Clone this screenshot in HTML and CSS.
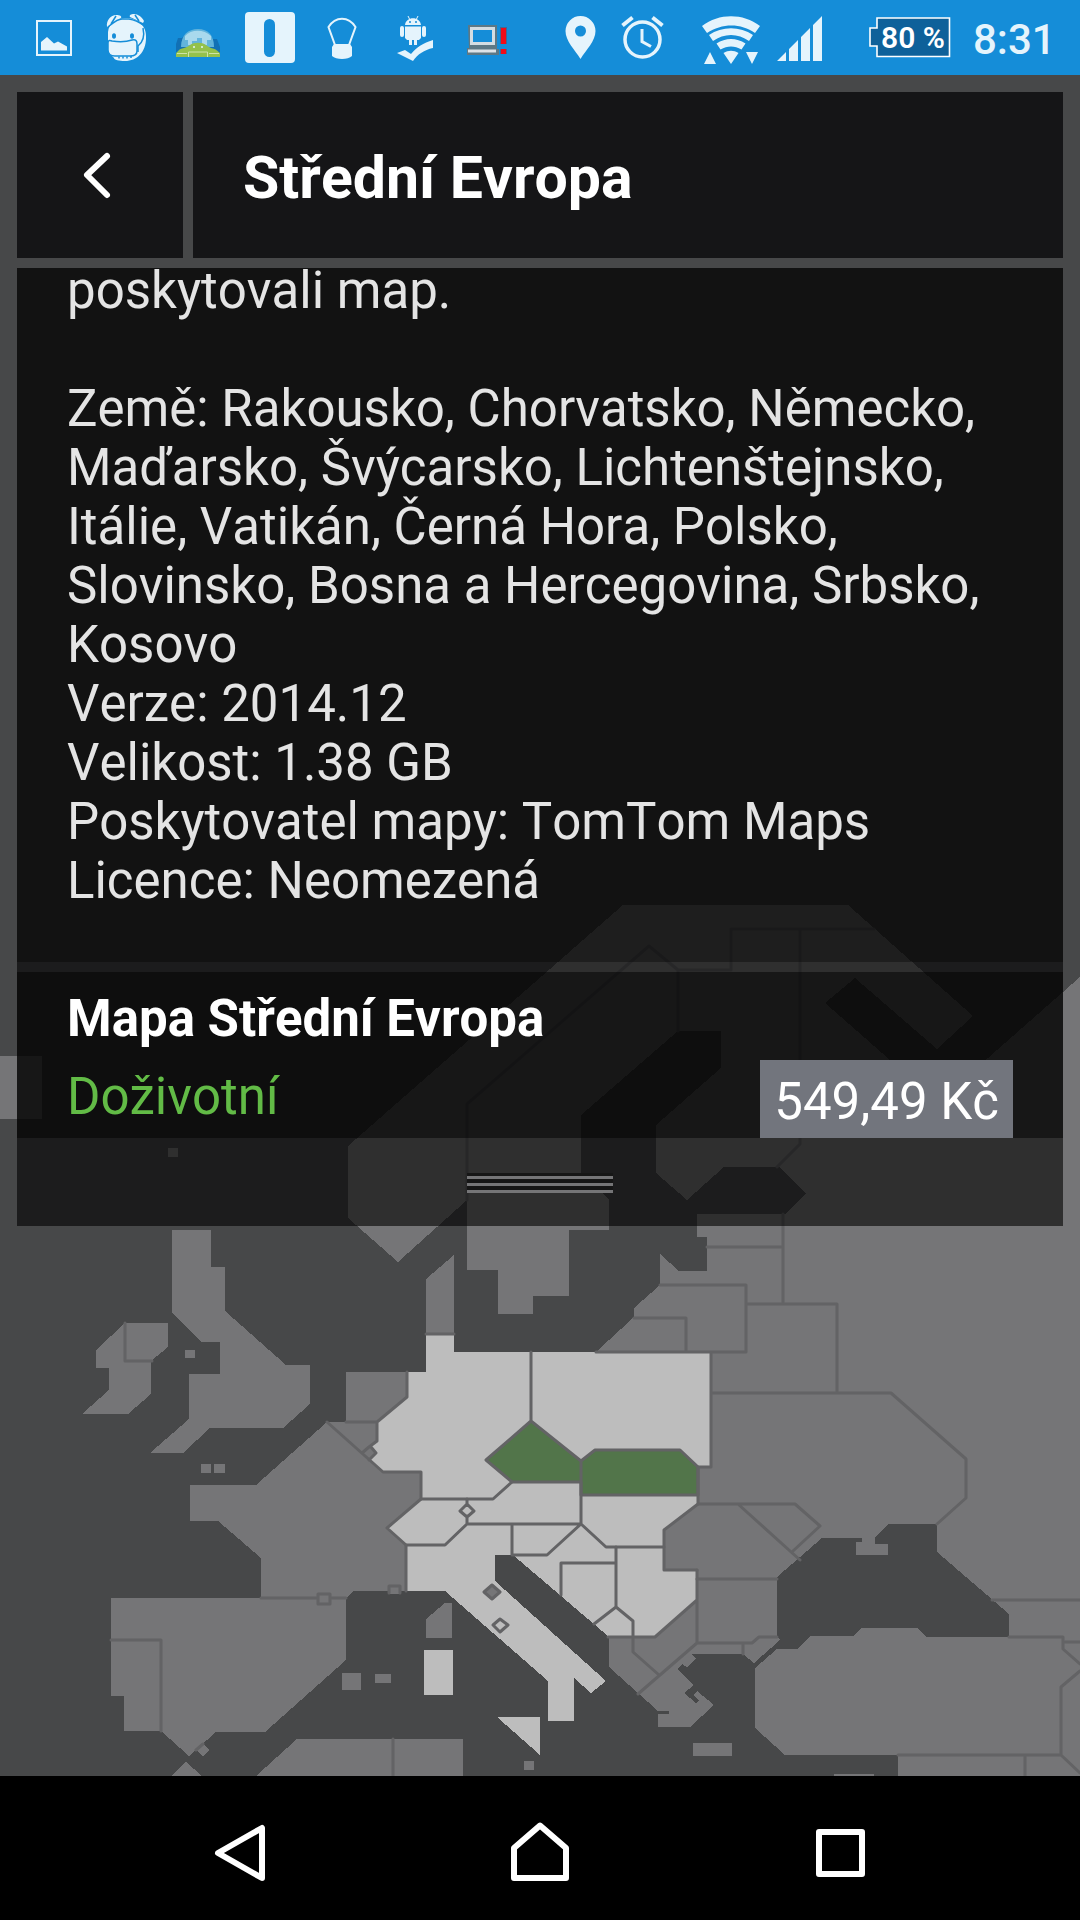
FILE: index.html
```html
<!DOCTYPE html>
<html lang="cs">
<head>
<meta charset="utf-8">
<meta name="viewport" content="width=device-width, initial-scale=1">
<title>Střední Evropa</title>
<link rel="stylesheet" href="styles.css">
</head>
<body>
<header class="status">
  <div class="status-group">
    <svg class="status-icon" width="72" height="75" viewBox="18 0 72 75" aria-hidden="true">
      <rect x="37" y="21" width="34" height="34" fill="none" stroke="#e5f4fc" stroke-width="2"/>
      <path d="M41 50.500V42l6-5 7 6.500 4-2 9 5V50.500Z" fill="#e5f4fc"/>
    </svg>
    <svg class="status-icon" width="72" height="75" viewBox="90 0 72 75" aria-hidden="true">
      <path d="M108 42V32c1-9 8-13 17-14 13 0 22 8 21 20 0 14-9 23-21 23-6 0-11-1-11-3l-4-4Z" fill="#e5f4fc"/>
      <path d="M107 27c-1-7 4-12 9-12 4 0 6 1 5 3ZM144 21c-2-4-6-7-10-7-3 0-5 1-4 3l13 6Z" fill="#e5f4fc"/>
      <path d="M108 27c5-4 9-8 14-8h7c6 1 10 3 14 6M111 24l5-8M135 15l4 6" fill="none" stroke="#158dd8" stroke-width="1.500"/>
      <path d="M108 43c0-3 2-3 4-2 7 1 14 1 20-1 4-1 5 1 5 4v7c0 4-3 5-7 5h-15c-5 0-7-3-7-6Z" fill="#e5f4fc" stroke="#158dd8" stroke-width="1.500"/>
      <path d="M143 28c2 9 0 14-5 18v6M119 56.500v2M123 56.500v2M127 56.500v2M131 56v2" fill="none" stroke="#158dd8" stroke-width="1.500"/>
      <ellipse cx="114" cy="36" rx="2" ry="2.800" fill="#158dd8"/><ellipse cx="132" cy="36" rx="2" ry="2.800" fill="#158dd8"/>
    </svg>
    <svg class="status-icon" width="72" height="75" viewBox="162 0 72 75" aria-hidden="true">
      <path d="M176 57V44l2-6h4l4-4h23l4 5h4l3 8v10Z" fill="#1170b5"/>
      <path d="M181 47c0-12 7-18 17-18s16 6 16 18Z" fill="#62b4dc"/>
      <path d="M185 36c6-7 19-7 26 0v4h-4v5h-5v-7h-5v3h-5v4h-4v-5h-3Z" fill="#a9d9ed"/>
      <path d="M176 57v-4c3-2 2-4 8-5 3-1 5-2 6-3 4-3 12-3 16 0 1 1 3 2 5 3 6 1 6 3 9 5v4Z" fill="#94c14b"/>
      <path d="M188.500 57v-5h19v5M177 53.500h10M209 53.500h10" fill="none" stroke="#cfe3a8" stroke-width="1"/>
      <circle cx="194" cy="47" r="1" fill="#e5f4fc"/><circle cx="202" cy="47" r="1" fill="#e5f4fc"/>
    </svg>
    <svg class="status-icon" width="72" height="75" viewBox="234 0 72 75" aria-hidden="true">
      <rect x="245" y="12" width="50" height="51" rx="4" fill="#e5f4fc"/>
      <rect x="264" y="19" width="11" height="38" rx="5.500" fill="#158dd8"/>
    </svg>
    <svg class="status-icon" width="72" height="75" viewBox="306 0 72 75" aria-hidden="true">
      <path d="M335 45L328.500 27c7-11 20-11 27 0L349 45" fill="none" stroke="#e5f4fc" stroke-width="2"/>
      <path d="M334 44h16l2 3v9c-4 4-16 4-20 0v-9Z" fill="#e5f4fc"/>
    </svg>
    <svg class="status-icon" width="72" height="75" viewBox="378 0 72 75" aria-hidden="true">
      <path d="M405 25c1-9 15-9 16 0ZM405 26.500h16V38l-2 2h-2v5h-3v-5h-2v5h-3v-5h-2l-2-2Z" fill="#e5f4fc"/>
      <rect x="400" y="26" width="4" height="11" rx="2" fill="#e5f4fc"/><rect x="422" y="26" width="4" height="11" rx="2" fill="#e5f4fc"/>
      <path d="M408 16l2 4M418 16l-2 4" stroke="#e5f4fc"/>
      <circle cx="410" cy="22" r="1" fill="#158dd8"/><circle cx="416" cy="22" r="1" fill="#158dd8"/>
      <path d="M397 53l8-3 6 4c6-7 12-11 22-14v8c-9 2-15 6-20 13Z" fill="#e5f4fc"/>
    </svg>
    <svg class="status-icon" width="72" height="75" viewBox="450 0 72 75" aria-hidden="true">
      <path d="M468 25h29v24h2v6h-32v-7h2Z" fill="#5d7885"/>
      <rect x="471.500" y="28.500" width="22" height="15" fill="#158dd8" stroke="#d3dde3" stroke-width="3"/>
      <path d="M468 51h28" stroke="#dde3e7" stroke-width="3"/>
      <path d="M503.500 27v17M503.500 49v5" stroke="#46658e" stroke-width="7"/>
      <path d="M503.500 28v16M503.500 49v5" stroke="#f00b18" stroke-width="5"/>
    </svg>
  </div>
  <div class="status-group">
    <svg class="status-icon" width="61" height="75" viewBox="550 0 61 75" aria-hidden="true">
      <path fill-rule="evenodd" d="M580.500 59C575 50 565.500 41 565.500 31a15 15 0 0 1 30 0C595.500 41 586 50 580.500 59ZM580.500 25.500a5.500 5.500 0 1 0 0 11 5.500 5.500 0 0 0 0-11Z" fill="#e5f4fc"/>
    </svg>
    <svg class="status-icon" width="73" height="75" viewBox="611 0 73 75" aria-hidden="true">
      <circle cx="642.500" cy="39.500" r="17.500" fill="none" stroke="#e5f4fc" stroke-width="3.500"/>
      <path d="M622.500 25.500l10-8M662.500 25.500l-10-8" stroke="#e5f4fc" stroke-width="4"/>
      <path d="M642 29v12.500l9 5" fill="none" stroke="#e5f4fc" stroke-width="3"/>
    </svg>
    <svg class="status-icon" width="84" height="75" viewBox="684 0 84 75" aria-hidden="true">
      <path d="M702 26c17-13 41-13 58 0l-5 7c-14-10-33-10-48 0ZM709 35c13-9 31-9 44 0l-4 6c-11-8-25-8-36 0ZM716.500 43.500c9-6 20-6 29 0l-4 6c-7-4-14-4-21 0ZM723.500 53c5-3 10-3 15 0l-7.500 11ZM704 64l6-12 6 12ZM746 52h12l-6 12Z" fill="#e5f4fc"/>
    </svg>
    <svg class="status-icon" width="68" height="75" viewBox="768 0 68 75" aria-hidden="true">
      <path d="M777 61l9-9v9ZM789 61V49l9-9v21ZM801 61V37l9-9v33ZM813 61V25l9-9v45Z" fill="#e5f4fc"/>
    </svg>
    <svg class="status-icon" width="126" height="75" viewBox="836 0 126 75" role="img" aria-label="80 %">
      <path d="M877 18h72.500v38.500H877V46h-7V28h7Z" fill="#0e619a" stroke="#fff" stroke-width="1.600"/>
      <text class="battery-text" x="913" y="48" text-anchor="middle">80 %</text>
    </svg>
    <time class="clock">8:31</time>
  </div>
</header>

<main class="screen">
  <svg class="map" viewBox="0 75 1080 1701" preserveAspectRatio="xMidYMax slice" aria-hidden="true">
    <g class="land" shape-rendering="crispEdges">
      <path d="M398 1262L348 1218V1146L623 905H848L973 1016 937 1049 855 978 825 1003 938 1102 1080 977V1776H898V1755H785L755 1728V1668L777 1649H797L811 1636H853L861 1628H917L927 1637H1009V1614L937 1552V1524H889L875 1537V1544H888V1555H856V1542H862V1538H822L777 1577V1637L780 1640 754 1663 743 1654H692L696 1659 687 1667 682 1664 677 1669 694 1685 684 1693 696 1703 699 1700 693 1695 697 1691 714 1705 690 1727H658V1714H669V1711H658L609 1667V1637L513 1555H495V1581L606 1681 591 1693 574 1678V1721H548V1681L445 1591H354L346 1598V1660L265 1732H216L189 1756 161 1731H124V1696H111V1598H261V1558L218 1521H190V1485H256L327 1422H346V1372H426V1279L454 1255V1352H596L634 1317V1308L660 1285V1254L679 1271H707V1237H697V1214H785L806 1194 779 1167H724L687 1200 656 1173V1125L721 1068V1031H678L581 1115V1173L609 1199V1230H569V1296H533V1314H498V1270H467V1200Z"/>
      <path d="M172 1230H211V1267H225V1311L286 1365H310V1404L283 1428H210L183 1453H150L189 1419V1374H220V1342H202L172 1313Z"/>
      <path d="M125 1323H168V1347L151 1361V1394L128 1414H82L109 1390V1368H96V1350Z"/>
      <path d="M426 1619L445 1603H452V1638H426ZM297 1739H463V1776H256ZM171 1776L186 1762 202 1776ZM203 1744L210 1750 203 1756 196 1750Z"/>
      <path d="M0 1056H42V1119H0ZM168 1148h10v9h-10ZM185 1350h10v8h-10ZM201 1464h10v9h-10ZM214 1464h11v9h-11ZM342 1673h19v17h-19ZM375 1674h16v9h-16ZM524 1761h10v9h-10ZM693 1743h39v13h-39ZM834 1774h40v2h-40ZM389 1585h11v9h-11Z"/>
    </g>
    <g class="offer" shape-rendering="crispEdges">
      <path d="M426 1334H454V1352H711V1467H698V1504L664 1530V1570H697V1600L655 1637H609L513 1555H495V1581L606 1681 591 1693 574 1678V1721H548V1681L445 1591H406V1545L387 1528 421 1499V1472H383L369 1460 376 1453 371 1446 377 1441V1422L407 1397V1372H426Z"/>
      <path d="M424 1650h29v45h-29ZM497 1717H540V1755Z"/>
    </g>
    <path class="owned" d="M531 1421L581 1461 595 1450H680L698 1467V1495H581V1482H512L486 1460Z"/>
    <path class="tiny" d="M492 1585L500 1592 492 1599 484 1592Z"/>
    <g class="border">
      <path d="M125 1323V1361H152M426 1334H454M531 1352V1421M531 1421L581 1461V1482H512L486 1460ZM581 1461L595 1450H680L698 1467V1495H581Z"/>
      <path d="M407 1372V1397L377 1422V1441L369 1447 362 1453M371 1447L376 1453 369 1460M327 1422L383 1472H421V1499H493L512 1482M346 1422H377"/>
      <path d="M421 1499L387 1528 406 1545H445L467 1524V1516M467 1499V1504M467 1504L474 1511 467 1517 460 1511ZM467 1524H581V1482M512 1524V1555H547L581 1524 606 1547H664"/>
      <path d="M616 1547V1607M561 1595V1563H616M594 1624L616 1607 633 1621V1652L659 1675M608 1637H655L697 1600M697 1570V1643M638 1694L697 1643H752L759 1637H777M743 1643V1654"/>
      <path d="M406 1545V1591M389 1593V1586H400V1593M318 1594H330V1604H318ZM261 1598H318M330 1598H346M111 1640H161V1731M196 1750L203 1744M393 1739V1776"/>
      <path d="M492 1585L500 1592 492 1599 484 1592ZM500 1619L508 1625 500 1632 493 1625Z"/>
      <path d="M596 1352H746V1285H660M634 1318H686V1352M707 1247H783M783 1214V1304M746 1304H837V1393M711 1352V1467H698V1504L664 1530V1570H697M711 1393H891L966 1459V1498L937 1524"/>
      <path d="M698 1504H795L820 1526 793 1551M738 1504L800 1560M697 1579H777M992 1600H1080M1009 1637H1063V1649L1080 1664M1065 1642H1080M1080 1671L1061 1687V1755H898M1061 1755L1080 1773M1025 1755V1776"/>
      <path d="M467 1200V1104L649 946 678 970H731V929H874M678 970V1031M800 929V1144L777 1167"/>
    </g>
  </svg>

  <div class="titlebar">
    <button class="back" type="button" aria-label="Zpět">
      <svg width="30" height="50" viewBox="0 0 30 50" aria-hidden="true"><path d="M25 6L5 25 25 45" fill="none" stroke="#fff" stroke-width="6" stroke-linecap="round" stroke-linejoin="round"/></svg>
    </button>
    <h1 class="title">Střední Evropa</h1>
  </div>

  <section class="panel">
    <div class="details">
      <p class="lead-end">poskytovali map.</p>
      <p>Země: Rakousko, Chorvatsko, Německo, Maďarsko, Švýcarsko, Lichtenštejnsko, Itálie, Vatikán, Černá Hora, Polsko, Slovinsko, Bosna a Hercegovina, Srbsko, Kosovo<br>Verze: 2014.12<br>Velikost: 1.38 GB<br>Poskytovatel mapy: TomTom Maps<br>Licence: Neomezená</p>
    </div>
    <div class="product">
      <div class="product-info">
        <h2 class="product-name">Mapa Střední Evropa</h2>
        <p class="product-term">Doživotní</p>
      </div>
      <button class="price" type="button">549,49 Kč</button>
    </div>
    <div class="handle">
      <svg width="146" height="20" viewBox="0 0 146 20" shape-rendering="crispEdges" aria-hidden="true"><path d="M0 0H146V20H0Z" fill="#161616"/><path d="M0 4.500H146M0 11.500H146M0 18.500H146" stroke="#757577" stroke-width="3"/></svg>
    </div>
  </section>
</main>

<nav class="navbar" aria-label="Systém">
  <button class="nav-button" type="button" aria-label="Zpět"><svg width="60" height="64" viewBox="209 1820 60 64" aria-hidden="true"><path d="M262 1828V1878L218 1853Z"/></svg></button>
  <button class="nav-button" type="button" aria-label="Domů"><svg width="60" height="64" viewBox="510 1820 60 64" aria-hidden="true"><path d="M540 1825.500L566 1848V1878H514V1848Z"/></svg></button>
  <button class="nav-button" type="button" aria-label="Přehled"><svg width="60" height="64" viewBox="811 1820 60 64" aria-hidden="true"><path d="M819 1832H862V1874H819Z"/></svg></button>
</nav>
</body>
</html>
```
FILE: styles.css
```css
* {
  box-sizing: border-box;
}

body {
  margin: 0;
  min-height: 100vh;
  display: flex;
  flex-direction: column;
  background: #000;
  color: #e4e4e4;
  font-family: Roboto, "Noto Sans", sans-serif;
  font-size: 51px;
  font-kerning: none;
  line-height: 59px;
}

h1, h2, p {
  margin: 0;
}

button {
  border: 0;
  padding: 0;
  background: none;
  color: #fff;
  font: inherit;
  font-kerning: none;
}

.status {
  display: flex;
  justify-content: space-between;
  height: 75px;
  padding: 0 27px 0 18px;
  background: #158dd8;
  color: #e5f4fc;
}

.status-group {
  display: flex;
  align-items: center;
}

.status-icon {
  flex: none;
}

.battery-text {
  fill: #fff;
  font-size: 30px;
  font-weight: 600;
}

.clock {
  width: 80px;
  margin-left: 11px;
  padding-top: 4px;
  font-size: 42px;
  font-weight: 500;
  white-space: nowrap;
}

.screen {
  position: relative;
  flex: 1;
  display: flex;
  flex-direction: column;
  gap: 10px;
  padding: 17px 17px 0;
  background: #474849;
  overflow: hidden;
}

.map {
  position: absolute;
  inset: 0;
  width: 100%;
  height: 100%;
}

.land,
.tiny {
  fill: #757577;
}

.offer {
  fill: #bdbdbd;
}

.owned {
  fill: #52754a;
}

.border {
  fill: none;
  stroke: #636365;
  stroke-width: 3;
  stroke-linejoin: round;
  stroke-linecap: round;
}

.titlebar,
.panel {
  position: relative;
}

.titlebar {
  display: flex;
  gap: 10px;
  height: 166px;
}

.back,
.title {
  display: flex;
  align-items: center;
  background: #151517;
}

.back {
  width: 166px;
  justify-content: center;
  padding-right: 6px;
}

.title {
  flex: 1;
  padding: 4px 50px 0;
  color: #fff;
  font-size: 59px;
  font-weight: 700;
}

.panel {
  background: rgba(0, 0, 0, 0.6);
}

.details {
  display: flex;
  flex-direction: column;
  gap: 66px;
  padding: 0 50px 52px;
  background: rgba(0, 0, 0, 0.35);
}

.lead-end {
  line-height: 45px;
}

.product {
  display: flex;
  justify-content: space-between;
  align-items: flex-end;
  min-height: 166px;
  margin-top: 10px;
  padding: 0 50px;
  background: rgba(0, 0, 0, 0.5);
}

.product-info {
  display: flex;
  flex-direction: column;
  gap: 19px;
  padding-bottom: 12px;
}

.product-name {
  color: #fff;
  font-size: 51px;
  font-weight: 700;
}

.product-term {
  color: #62bb46;
}

.price {
  height: 78px;
  padding: 4px 14px 0;
  background: #72757d;
}

.handle {
  display: flex;
  justify-content: center;
  height: 88px;
  padding-top: 35px;
}

.navbar {
  display: flex;
  justify-content: center;
  gap: 121px;
  height: 144px;
  background: #000;
}

.nav-button {
  width: 180px;
  display: grid;
  place-items: center;
  padding-top: 8px;
}

.nav-button path {
  fill: none;
  stroke: #fff;
  stroke-width: 6;
  stroke-linejoin: round;
}
```
